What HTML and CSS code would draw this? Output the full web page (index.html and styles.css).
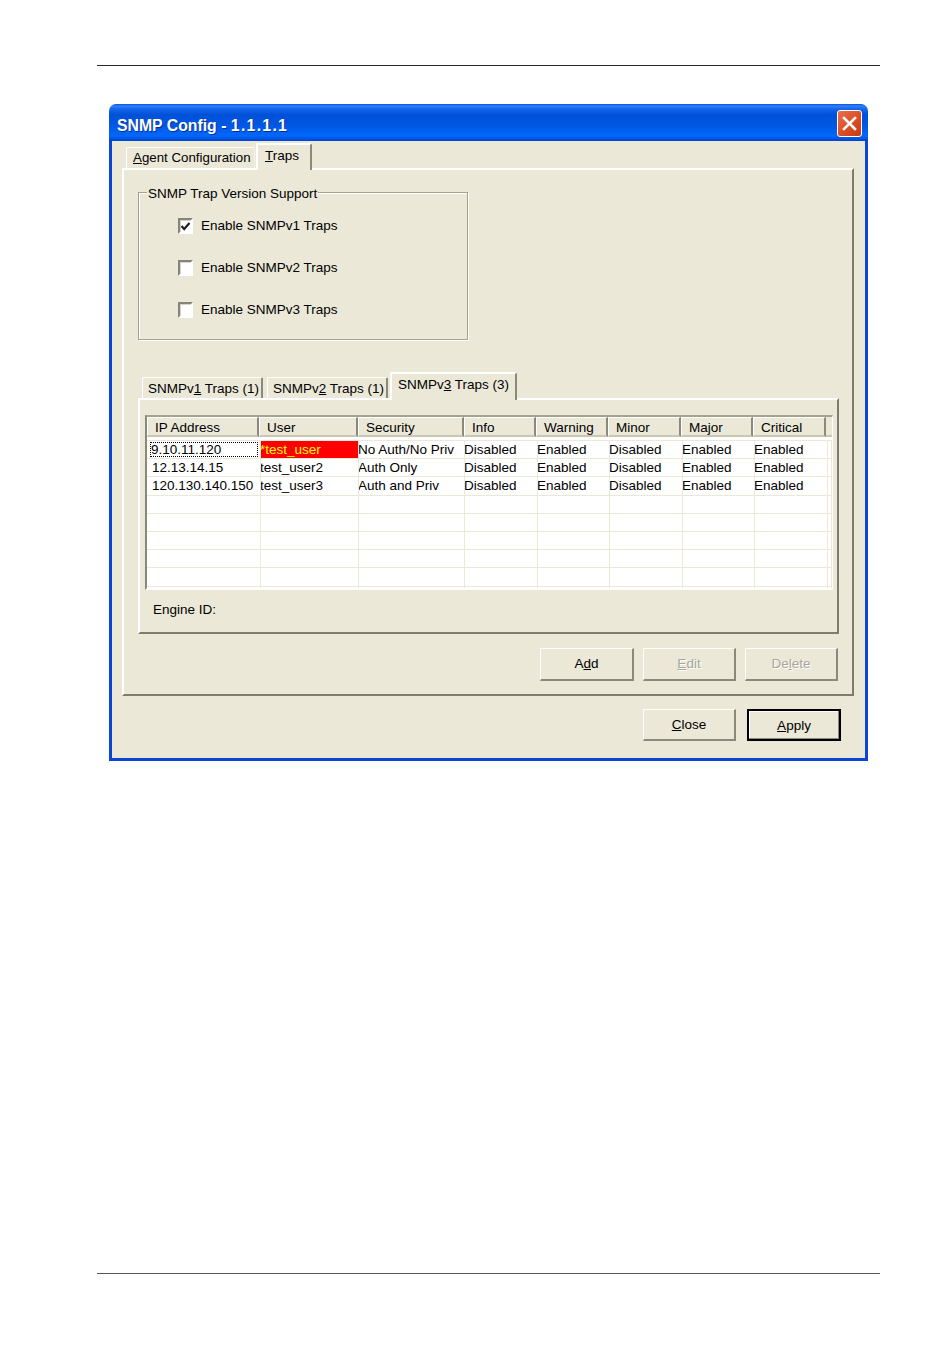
FILE: index.html
```html
<!DOCTYPE html>
<html lang="en">
<head>
<meta charset="utf-8">
<title>SNMP Config</title>
<link rel="stylesheet" href="styles.css">
</head>
<body>
<div class="page">
  <div class="rule"></div>
  <div class="window">
    <div class="titlebar">
      <span class="title">SNMP Config - <span class="version">1.1.1.1</span></span>
      <span class="close">
        <svg width="15" height="15" viewBox="0 0 15 15"><path d="M2 2 L13 13 M13 2 L2 13" stroke="#fff" stroke-width="2.6" stroke-linecap="square" fill="none"/></svg>
      </span>
    </div>
    <div class="body">
      <div class="tabs outer-tabs">
        <div class="tab tab-agent"><span><u>A</u>gent Configuration</span></div>
        <div class="tab tab-traps active"><span><u>T</u>raps</span></div>
      </div>
      <div class="panel outer-panel">
        <div class="group">
          <span class="legend">SNMP Trap Version Support</span>
          <div class="check-row"><span class="checkbox"><svg width="11" height="11" viewBox="0 0 11 11"><path d="M1.5 5 L4.2 8 L9.5 2" stroke="#222" stroke-width="2.2" fill="none"/></svg></span><span class="check-label">Enable SNMPv1 Traps</span></div>
          <div class="check-row"><span class="checkbox"></span><span class="check-label">Enable SNMPv2 Traps</span></div>
          <div class="check-row"><span class="checkbox"></span><span class="check-label">Enable SNMPv3 Traps</span></div>
        </div>
        <div class="tabs inner-tabs">
          <div class="tab tab-v1"><span>SNMPv<u>1</u> Traps (1)</span></div>
          <div class="tab tab-v2"><span>SNMPv<u>2</u> Traps (1)</span></div>
          <div class="tab tab-v3 active"><span>SNMPv<u>3</u> Traps (3)</span></div>
        </div>
        <div class="panel inner-panel">
          <div class="list">
            <div class="list-head">
              <div class="hcell">IP Address</div>
              <div class="hcell">User</div>
              <div class="hcell">Security</div>
              <div class="hcell">Info</div>
              <div class="hcell">Warning</div>
              <div class="hcell">Minor</div>
              <div class="hcell">Major</div>
              <div class="hcell">Critical</div>
              <div class="hfill"></div>
            </div>
            <div class="list-rows">
              <div class="row">
                <div class="cell first"><span class="focus">9.10.11.120</span></div>
                <div class="cell alert">*test_user</div>
                <div class="cell">No Auth/No Priv</div>
                <div class="cell">Disabled</div>
                <div class="cell">Enabled</div>
                <div class="cell">Disabled</div>
                <div class="cell">Enabled</div>
                <div class="cell">Enabled</div>
                <div class="cell"></div>
              </div>
              <div class="row">
                <div class="cell first">12.13.14.15</div>
                <div class="cell">test_user2</div>
                <div class="cell">Auth Only</div>
                <div class="cell">Disabled</div>
                <div class="cell">Enabled</div>
                <div class="cell">Disabled</div>
                <div class="cell">Enabled</div>
                <div class="cell">Enabled</div>
                <div class="cell"></div>
              </div>
              <div class="row">
                <div class="cell first">120.130.140.150</div>
                <div class="cell">test_user3</div>
                <div class="cell">Auth and Priv</div>
                <div class="cell">Disabled</div>
                <div class="cell">Enabled</div>
                <div class="cell">Disabled</div>
                <div class="cell">Enabled</div>
                <div class="cell">Enabled</div>
                <div class="cell"></div>
              </div>
              <div class="row"><div class="cell"></div><div class="cell"></div><div class="cell"></div><div class="cell"></div><div class="cell"></div><div class="cell"></div><div class="cell"></div><div class="cell"></div><div class="cell"></div></div>
              <div class="row"><div class="cell"></div><div class="cell"></div><div class="cell"></div><div class="cell"></div><div class="cell"></div><div class="cell"></div><div class="cell"></div><div class="cell"></div><div class="cell"></div></div>
              <div class="row"><div class="cell"></div><div class="cell"></div><div class="cell"></div><div class="cell"></div><div class="cell"></div><div class="cell"></div><div class="cell"></div><div class="cell"></div><div class="cell"></div></div>
              <div class="row"><div class="cell"></div><div class="cell"></div><div class="cell"></div><div class="cell"></div><div class="cell"></div><div class="cell"></div><div class="cell"></div><div class="cell"></div><div class="cell"></div></div>
              <div class="row"><div class="cell"></div><div class="cell"></div><div class="cell"></div><div class="cell"></div><div class="cell"></div><div class="cell"></div><div class="cell"></div><div class="cell"></div><div class="cell"></div></div>
              <div class="row"><div class="cell"></div><div class="cell"></div><div class="cell"></div><div class="cell"></div><div class="cell"></div><div class="cell"></div><div class="cell"></div><div class="cell"></div><div class="cell"></div></div>
            </div>
          </div>
          <div class="engine">Engine ID:</div>
        </div>
        <div class="buttons action-buttons">
          <div class="btn btn-add"><span>A<u>d</u>d</span></div>
          <div class="btn disabled"><span><u>E</u>dit</span></div>
          <div class="btn disabled"><span>De<u>l</u>ete</span></div>
        </div>
      </div>
      <div class="buttons footer-buttons">
        <div class="btn"><span><u>C</u>lose</span></div>
        <div class="btn default"><span><u>A</u>pply</span></div>
      </div>
    </div>
  </div>
  <div class="rule footer-rule"></div>
</div>
</body>
</html>
```

FILE: styles.css
```css
* { box-sizing: border-box; }
html, body { margin: 0; background: #fff; }
body { font-family: "Liberation Sans", Arial, sans-serif; font-size: 13.5px; color: #000; }

.page { width: 950px; height: 1360px; padding: 65px 70px 0 97px; }
.rule { height: 1px; background: #2a2a2a; }
.footer-rule { margin-top: 512px; background: #555; }

.window { margin: 38px 0 0 12px; width: 759px; }

.titlebar {
  height: 37px;
  display: flex;
  align-items: center;
  justify-content: space-between;
  padding: 0 6px 0 8px;
  border-radius: 7px 7px 0 0;
  background: linear-gradient(to bottom, #0a4fdc 0, #2f83f8 2px, #1466ea 5px, #0050d8 11px, #0058e4 22px, #0068fb 32px, #0058e8 34px, #0044cc 37px);
}
.title {
  margin-top: 7px;
  font-weight: bold;
  font-size: 15.8px;
  color: #fff;
  text-shadow: 1px 1px 0 #0b2f9a;
}
.version { letter-spacing: 1.3px; }
.close {
  width: 25px;
  height: 27px;
  margin-top: 1px;
  display: flex;
  align-items: center;
  justify-content: center;
  border: 1px solid #fff;
  border-radius: 3px;
  background: linear-gradient(135deg, #e8714e 0, #dd4c22 55%, #c83a12 100%);
}

.body {
  height: 620px;
  background: #ebe8d8;
  border: 3px solid #0a45d6;
  border-top: 0;
  padding: 2px 11px 0 10px;
}

.tabs { display: flex; align-items: flex-end; position: relative; z-index: 1; }
.outer-tabs { height: 25px; padding-left: 4px; gap: 1px; }
.inner-tabs { height: 26px; margin-top: 32px; padding-left: 4px; }

.tab {
  display: flex;
  align-items: center;
  background: #ebe8d8;
  border: 1px solid #fff;
  border-bottom: 0;
  border-right: 2px solid #8b897b;
  border-radius: 2px 2px 0 0;
  white-space: nowrap;
}
.tab.active { margin-bottom: -2px; border-top: 2px solid #fff; border-left: 2px solid #fff; }
.tab-agent { width: 129px; height: 21px; padding: 0 0 2px 6px; border-right: 1px solid #f4f2e8; font-size: 13.3px; }
.tab-traps { width: 56px; height: 27px; padding: 0 0 4px 7px; }
.tab-v1 { width: 121px; height: 21px; padding-left: 5px; margin-right: 4px; }
.tab-v2 { width: 121px; height: 21px; padding-left: 5px; margin-right: 2px; }
.tab-v3 { width: 127px; height: 28px; padding: 0 0 5px 6px; }

.panel {
  border: 2px solid #7f7c6e;
  border-left-color: #fff;
  border-top-color: #fff;
  background: #ebe8d8;
}
.outer-panel { width: 732px; padding: 22px 14px 13px; }
.inner-panel { width: 701px; height: 236px; padding: 15px 0 0 5px; }

.group {
  position: relative;
  width: 330px;
  height: 148px;
  padding: 12px 0 0 39px;
  border: 1px solid #a3a190;
  box-shadow: 1px 1px 0 #fff, inset 1px 1px 0 #fff;
}
.legend {
  position: absolute;
  left: 8px;
  top: -7px;
  padding: 0 1px;
  background: #ebe8d8;
  line-height: 15px;
}
.check-row { height: 42px; display: flex; align-items: center; gap: 8px; }
.check-label { margin-bottom: 2px; }
.checkbox {
  width: 15px;
  height: 16px;
  display: flex;
  align-items: center;
  justify-content: center;
  background: #fff;
  border: 2px solid #fff;
  border-left-color: #85837a;
  border-top-color: #85837a;
  box-shadow: inset 1px 1px 0 #d8d5c6;
}

.list {
  width: 688px;
  height: 175px;
  overflow: hidden;
  background: #fff;
  border-left: 2px solid #8a8878;
  border-top: 2px solid #a3a190;
  border-right: 1px solid #fff;
  border-bottom: 2px solid #fff;
}
.list-head, .row { display: grid; }
.list-head {
  height: 20px;
  margin-bottom: 3px;
  grid-template-columns: 112px 99px 106px 72px 72px 73px 72px 73px 1fr;
  background: #ebe8d8;
}
.hcell {
  display: flex;
  align-items: center;
  padding: 2px 0 0 7px;
  background: #ebe8d8;
  border: 1px solid #fff;
  border-right: 2px solid #8b897b;
  border-bottom: 2px solid #c9c6b5;
}
.hfill { background: #ebe8d8; border-bottom: 2px solid #c9c6b5; }

.list-rows { height: 150px; overflow: hidden; border-top: 1px solid #ebe8d8; }
.row {
  height: 18.2px;
  grid-template-columns: 114px 98px 106px 73px 72px 73px 72px 73px 1fr;
  border-bottom: 1px solid #ebe8d8;
}
.cell {
  display: flex;
  align-items: center;
  line-height: 16px;
  white-space: nowrap;
  overflow: hidden;
  border-right: 1px solid #ebe8d8;
  text-indent: -1px;
}
.first { padding-left: 5px; text-indent: 0; }
.focus { flex: 1; margin: 0 2px 0 -2px; padding-left: 1px; line-height: 15px; outline: 1px dotted #000; outline-offset: -1px; }
.alert { background: #ff0000; color: #ffff00; }

.engine { margin-top: 12px; padding-left: 8px; line-height: 16px; }

.buttons { display: flex; justify-content: flex-end; }
.action-buttons { margin-top: 14px; gap: 9px; }
.action-buttons .btn { padding-bottom: 2px; }
.footer-buttons { margin: 13px 13px 0 0; gap: 11px; }

.btn {
  width: 93px;
  height: 33px;
  display: flex;
  align-items: center;
  justify-content: center;
  background: #ebe8d8;
  border: 1px solid #fff;
  border-right: 2px solid #8b897b;
  border-bottom: 2px solid #8b897b;
}
.btn-add { width: 94px; }
.footer-buttons .btn { height: 32px; }
.disabled { color: #a8a698; text-shadow: 1px 1px 0 #fff; }
.btn.default { width: 94px; border: 2px solid #000; box-shadow: inset -1px -1px 0 #8b897b, inset 1px 1px 0 #fff; }
```
